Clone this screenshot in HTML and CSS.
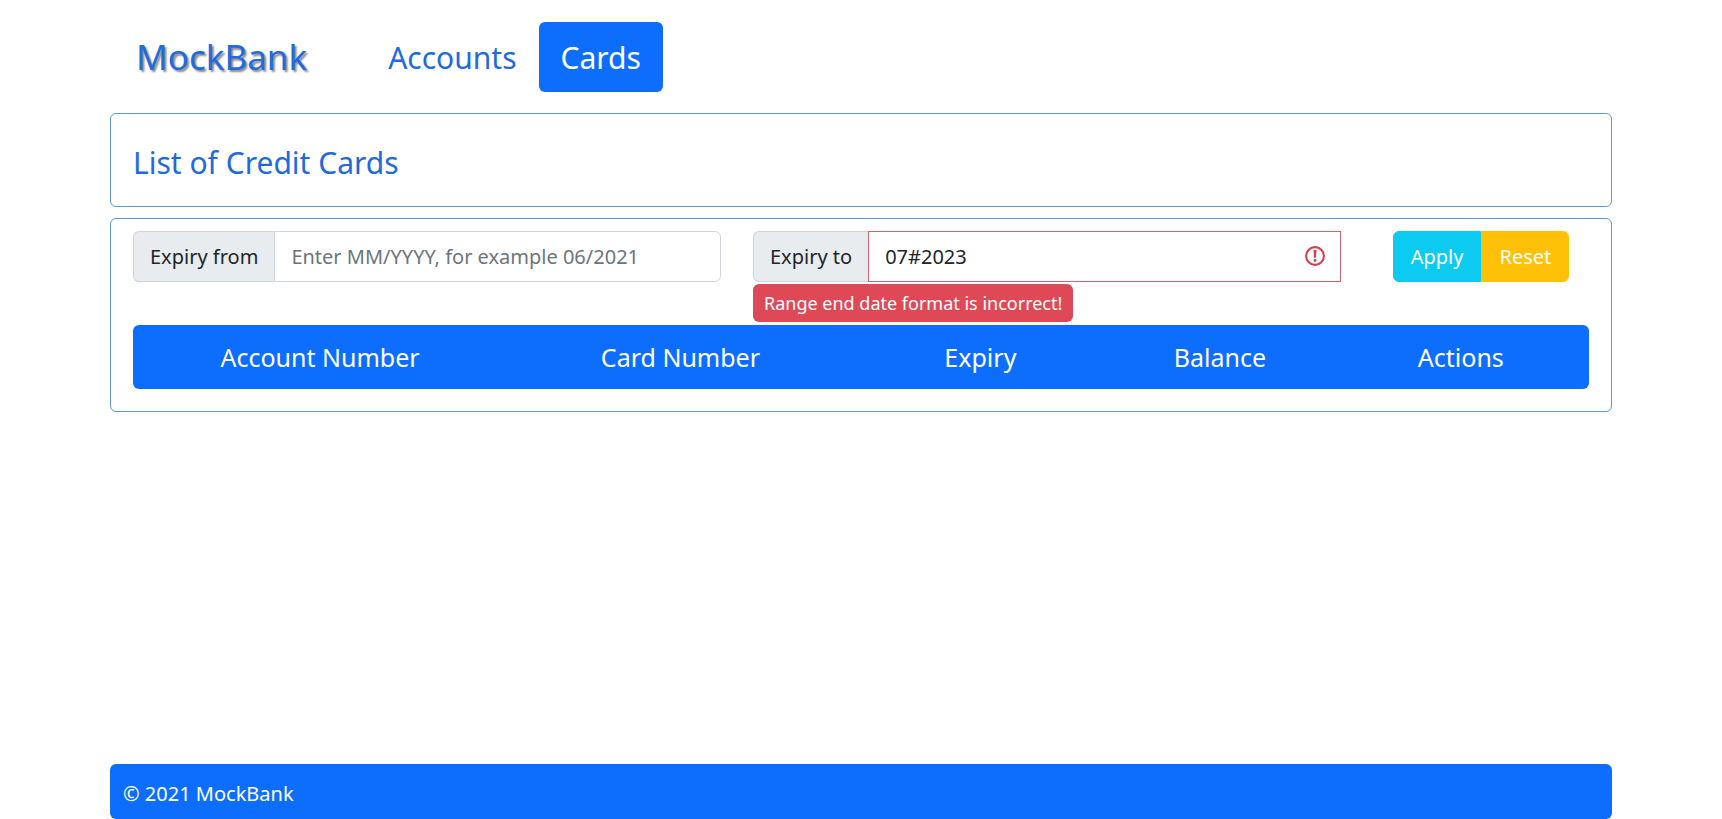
FILE: index.html
```html
<!DOCTYPE html>
<html lang="en">
<head>
  <meta charset="utf-8">
  <meta name="viewport" content="width=device-width, initial-scale=1">
  <title>MockBank - Cards</title>
  <link rel="stylesheet" href="styles.css">
</head>
<body>
  <div class="page">
    <header class="navbar">
      <a class="brand" href="#">MockBank</a>
      <nav class="nav">
        <a class="nav-link" href="#">Accounts</a>
        <a class="nav-link active" href="#" aria-current="page">Cards</a>
      </nav>
    </header>
    <main class="content">
      <section class="panel title-panel">
        <h1 class="title">List of Credit Cards</h1>
      </section>
      <section class="panel list-panel">
        <form class="filters">
          <div class="field">
            <div class="input-group">
              <label class="input-label" for="from">Expiry from</label>
              <input class="input" id="from" type="text" placeholder="Enter MM/YYYY, for example 06/2021">
            </div>
          </div>
          <div class="field">
            <div class="input-group">
              <label class="input-label" for="to">Expiry to</label>
              <div class="input-wrap">
                <input class="input invalid" id="to" type="text" value="07#2023" aria-invalid="true" aria-describedby="to-error">
                <svg class="error-icon" viewBox="0 0 20 20" aria-hidden="true">
                  <circle cx="10" cy="10" r="8.9" fill="none" stroke="#d63f50" stroke-width="2.1"/>
                  <path d="M8.500 4h3l-.6 7.800H9.100z" fill="#d63f50"/>
                  <circle cx="10" cy="14.500" r="1.400" fill="#d63f50"/>
                </svg>
              </div>
            </div>
            <div class="error" id="to-error">Range end date format is incorrect!</div>
          </div>
          <div class="field actions">
            <button class="button apply" type="button">Apply</button>
            <button class="button reset" type="button">Reset</button>
          </div>
        </form>
        <table class="cards">
          <thead>
            <tr>
              <th class="col-account" scope="col">Account Number</th>
              <th class="col-card" scope="col">Card Number</th>
              <th class="col-expiry" scope="col">Expiry</th>
              <th class="col-balance" scope="col">Balance</th>
              <th class="col-actions" scope="col">Actions</th>
            </tr>
          </thead>
        </table>
      </section>
    </main>
    <footer class="footer">© 2021 MockBank</footer>
  </div>
</body>
</html>
```
FILE: styles.css
```css
* {
  box-sizing: border-box;
}

body {
  margin: 0;
  background: #fff;
  color: #212529;
  font-family: "Segoe UI", "Noto Sans", sans-serif;
  font-size: 20px;
  line-height: 31px;
}

.page {
  display: flex;
  flex-direction: column;
  min-height: 100vh;
  max-width: 1502px;
  margin: 0 auto;
}

.navbar {
  display: flex;
  align-items: center;
  gap: 59px;
  padding: 22px 26px 21px;
}

.brand {
  color: #1f6be0;
  font-size: 35px;
  line-height: 48px;
  text-decoration: none;
  text-shadow: 2px 2px 2px #888;
}

.nav {
  display: flex;
}

.nav-link {
  padding: 12px 22px 10px;
  border-radius: 6px;
  color: #2169dd;
  font-size: 30px;
  line-height: 48px;
  text-decoration: none;
}

.nav-link.active {
  background: #0d6efd;
  color: #fff;
}

.content {
  display: flex;
  flex: 1;
  flex-direction: column;
  gap: 11px;
}

.panel {
  border: 1px solid #5b95dc;
  border-radius: 6px;
}

.title-panel {
  padding: 25px 22px 19px;
}

.title {
  margin: 0;
  color: #2169dd;
  font-size: 30px;
  font-weight: 400;
  line-height: 48px;
}

.list-panel {
  padding: 12px 22px 22px;
}

.filters {
  display: grid;
  grid-template-columns: 5fr 5fr 2fr;
  margin: 0 -16px;
}

.field {
  min-width: 0;
  padding: 0 16px;
}

.input-group {
  display: flex;
}

.input-label {
  padding: 9px 16px;
  border: 1px solid #ced4da;
  border-right: 0;
  border-radius: 6px 0 0 6px;
  background: #e9ecef;
  white-space: nowrap;
}

.input-wrap {
  position: relative;
  display: flex;
  flex: 1;
}

.input {
  flex: 1;
  min-width: 0;
  padding: 9px 16px;
  border: 1px solid #ced4da;
  border-radius: 0 6px 6px 0;
  color: #212529;
  font: inherit;
}

.input::placeholder {
  color: #6c757d;
  opacity: 1;
}

.input.invalid {
  padding-right: 48px;
  border-color: #d6606c;
  border-radius: 0;
}

.error-icon {
  position: absolute;
  top: 15px;
  right: 16px;
  width: 20px;
  height: 20px;
}

.error {
  width: fit-content;
  margin: 2px 0 3px;
  padding: 5px 11px;
  border-radius: 6px;
  background: #df4957;
  color: #fff;
  font-size: 18px;
  line-height: 28px;
}

.actions {
  display: flex;
  align-items: flex-start;
  justify-content: center;
}

.button {
  padding: 9px 17px;
  border: 1px solid;
  color: #fff;
  font: inherit;
}

.apply {
  border-color: #0dcaf0;
  border-radius: 6px 0 0 6px;
  background: #0dcaf0;
}

.reset {
  border-color: #ffc107;
  border-radius: 0 6px 6px 0;
  background: #ffc107;
}

.cards {
  width: 100%;
  overflow: hidden;
  border-collapse: collapse;
  border-radius: 6px;
  background: #0d6efd;
  color: #fff;
  font-size: 25px;
  line-height: 42px;
  table-layout: fixed;
}

.cards th {
  padding: 11px 0;
  font-weight: 400;
}

.col-account {
  width: 25.7%;
}

.col-card {
  width: 23.8%;
}

.col-expiry {
  width: 17.4%;
}

.col-balance {
  width: 15.5%;
}

.col-actions {
  width: 17.6%;
}

.footer {
  padding: 14px 13px 10px;
  border-radius: 6px;
  background: #0d6efd;
  color: #fff;
}
```
